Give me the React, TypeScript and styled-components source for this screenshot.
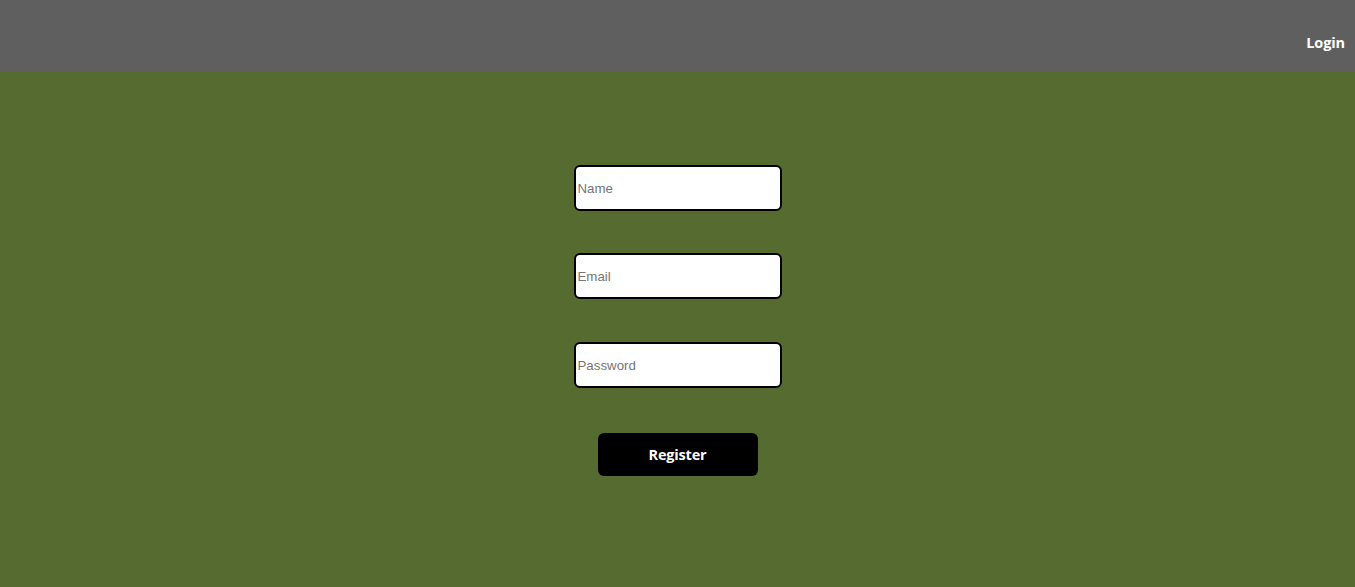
import React from "react";
import styled, { createGlobalStyle } from "styled-components";

const Global = createGlobalStyle`
  html, body { margin: 0; padding: 0; }
  body { background: #556b2f; font-family: "Liberation Sans", Arial, sans-serif; }
`;

const Page = styled.div`
  min-height: 587px;
  background: #556b2f;
  display: flex;
  flex-direction: column;
`;

const Header = styled.header`
  height: 71px;
  background: #5f5f5f;
  display: flex;
  justify-content: flex-end;
  align-items: center;
  padding: 14px 10px 0 0;
  box-sizing: border-box;
`;

const NavLink = styled.a`
  color: #ffffff;
  font-family: "Open Sans", "Noto Sans", sans-serif;
  font-weight: 700;
  font-size: 14.5px;
  letter-spacing: -0.1px;
  text-decoration: none;
`;

const Form = styled.form`
  display: flex;
  flex-direction: column;
  align-items: center;
  padding-top: 94px;
`;

const Input = styled.input<{ $gap: number }>`
  width: 208px;
  height: 46px;
  box-sizing: border-box;
  border: 2px solid #000;
  border-radius: 6px;
  background: #fff;
  padding: 0 2px;
  font-family: "Liberation Sans", Arial, sans-serif;
  font-size: 13.3px;
  margin-bottom: ${(p) => p.$gap}px;
  outline: none;
  &::placeholder { color: #757575; }
`;

const Button = styled.button`
  width: 160px;
  height: 43px;
  background: #000;
  color: #fff;
  border: none;
  border-radius: 6px;
  font-family: "Open Sans", "Noto Sans", sans-serif;
  font-weight: 700;
  font-size: 14.5px;
  letter-spacing: -0.2px;
  cursor: pointer;
`;

export default function App() {
  return (
    <Page>
      <Global />
      <Header>
        <NavLink href="#">Login</NavLink>
      </Header>
      <Form onSubmit={(e) => e.preventDefault()}>
        <Input $gap={42} placeholder="Name" />
        <Input $gap={43} placeholder="Email" />
        <Input $gap={45} type="password" placeholder="Password" />
        <Button type="submit">Register</Button>
      </Form>
    </Page>
  );
}
